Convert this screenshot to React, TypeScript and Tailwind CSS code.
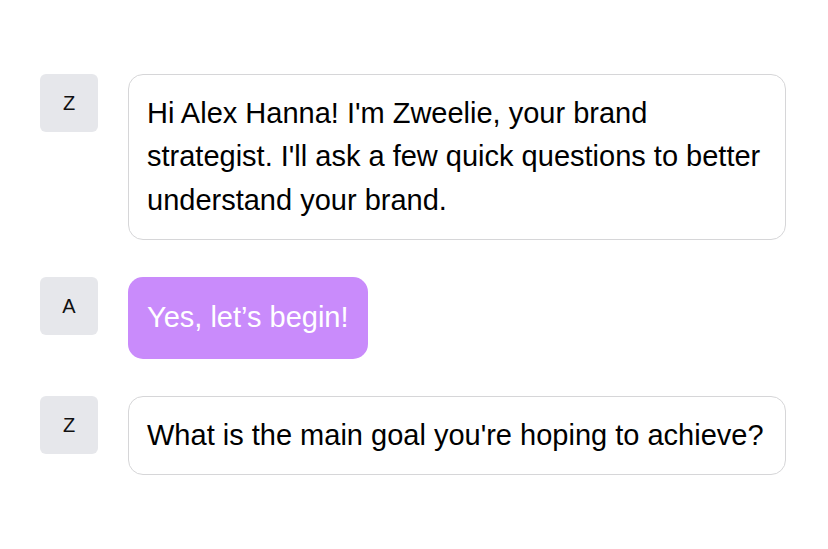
import React from "react";

function Avatar({ letter }: { letter: string }) {
  return (
    <div className="w-[58px] h-[58px] shrink-0 rounded-[6px] bg-[#e6e7eb] flex items-center justify-center text-[20px] text-[#111] leading-none">
      {letter}
    </div>
  );
}

export default function App() {
  return (
    <div
      className="w-full h-screen bg-white flex flex-col justify-center pl-10 pr-[42px]"
      style={{ fontFamily: '"Liberation Sans", Arial, sans-serif' }}
    >
      <div className="flex flex-col gap-[37px]">
        <div className="flex items-start gap-[30px]">
          <Avatar letter="Z" />
          <div className="flex-1 border border-[#d6d6d8] rounded-[15px] pl-[18px] pr-[14px] py-[17px] text-[29px] leading-[43.5px] text-black">
            Hi Alex Hanna! I'm Zweelie, your brand strategist. I'll ask a few quick questions to better understand your brand.
          </div>
        </div>
        <div className="flex items-start gap-[30px]">
          <Avatar letter="A" />
          <div className="bg-[#c98bfb] rounded-[15px] px-[19px] py-[19px] text-[29px] leading-[43.5px] text-white">
            Yes, let’s begin!
          </div>
        </div>
        <div className="flex items-start gap-[30px]">
          <Avatar letter="Z" />
          <div className="flex-1 border border-[#d6d6d8] rounded-[15px] pl-[18px] pr-[14px] py-[17px] text-[29px] leading-[43.5px] text-black">
            What is the main goal you're hoping to achieve?
          </div>
        </div>
      </div>
    </div>
  );
}
